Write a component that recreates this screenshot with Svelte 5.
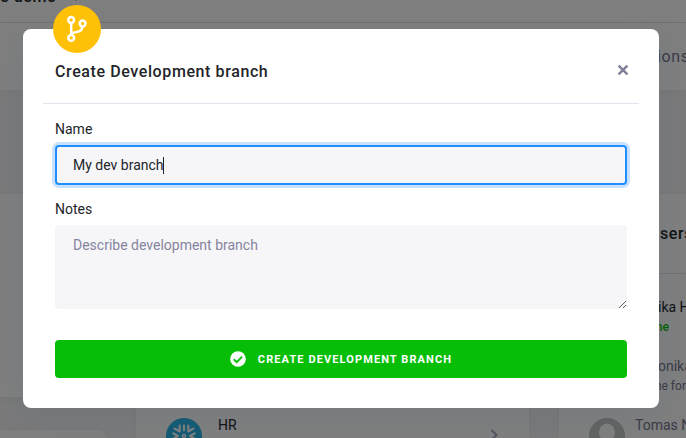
<script>
  let name = $state('My dev branch');
  let notes = $state('');
</script>

<div class="app">
  <div class="page" aria-hidden="true">
    <header><span>e demo</span><i class="caret"></i></header>
    <nav><span>ions</span></nav>
    <main>
      <div class="col left">
        <section class="card summary"></section>
        <section class="card next"></section>
      </div>
      <section class="card middle">
        <div class="bucket">
          <svg class="round" viewBox="0 0 36 36">
            <circle cx="18" cy="18" r="18" fill="#29b5e8" />
            <g fill="none" stroke="#fff" stroke-width="2.1" stroke-linecap="round" stroke-linejoin="round">
              <path d="M13.700 7.500v6L8.500 10.500M22.300 7.500v6l5.200-3M18 7.500v4.800" />
              <path d="M7.300 15.300l4.700 2.700-4.700 2.700M28.700 15.300L24 18l4.700 2.700" />
              <path d="M13.700 28.500v-6l-5.200 3M22.300 28.500v-6l5.200 3M18 28.500v-4.800" />
              <circle cx="18" cy="18" r="1.500" stroke-width="1.400" />
            </g>
          </svg>
          <span class="bucket-name">HR</span>
          <svg class="chevron" viewBox="0 0 8 12"><path d="M1.500 1l5 5-5 5" fill="none" stroke="#a9a8c4" stroke-width="2" /></svg>
        </div>
      </section>
      <section class="card users">
        <h3>sers</h3>
        <div class="user first"><b>ika H</b><small class="me">me</small></div>
        <div class="user second"><b>onika</b><small>me for</small></div>
        <div class="user third">
          <svg class="round" viewBox="0 0 36 36">
            <defs><clipPath id="avatar"><circle cx="18" cy="18" r="18" /></clipPath></defs>
            <g clip-path="url(#avatar)">
              <rect width="36" height="36" fill="#c5c6c6" />
              <ellipse cx="18" cy="14.500" rx="8" ry="9" fill="#fff" />
              <path d="M3 36c0-9 6-12 15-12s15 3 15 12z" fill="#fff" />
            </g>
          </svg>
          <b>Tomas N</b>
        </div>
      </section>
    </main>
  </div>

  <div class="backdrop">
    <div class="dialog" role="dialog" aria-labelledby="title">
      <div class="badge">
        <svg width="22" height="28" viewBox="0 0 22 28" fill="none" stroke="#fff" stroke-width="2.500">
          <circle cx="5.200" cy="5" r="2.900" />
          <circle cx="16.600" cy="8.500" r="2.900" />
          <circle cx="5.200" cy="22.900" r="2.900" />
          <path d="M5.200 8v11.800M5.200 18c5.400-.9 10.900-.8 11.200-6.500" />
        </svg>
      </div>
      <div class="head">
        <h2 id="title">Create Development branch</h2>
        <button class="close" aria-label="Close">
          <svg width="12" height="12" viewBox="0 0 12 12"><path d="M1.600 1.600l8.800 8.800M10.400 1.600l-8.800 8.800" stroke="#80809b" stroke-width="2.500" /></svg>
        </button>
      </div>
      <div class="body">
        <label for="name">Name</label>
        <div class="input" id="name" role="textbox" tabindex="0"><span>{name}</span><i class="cursor"></i></div>
        <label for="notes">Notes</label>
        <textarea id="notes" bind:value={notes} placeholder="Describe development branch"></textarea>
        <button class="submit">
          <svg width="16" height="16" viewBox="0 0 16 16"><circle cx="8" cy="8" r="7.800" fill="#fff" /><path d="M3.800 8.300l2.900 2.800 5.400-5.500" fill="none" stroke="#07be07" stroke-width="1.900" /></svg>
          <span>Create Development Branch</span>
        </button>
      </div>
    </div>
  </div>
</div>

<style>
  * { box-sizing: border-box; }
  .app {
    position: relative;
    width: 686px;
    height: 438px;
    overflow: hidden;
    font-family: Roboto, "Liberation Sans", sans-serif;
    font-size: 14px;
    color: #222529;
  }
  .page { height: 438px; overflow: hidden; background: #f5f5f6; }
  header {
    display: flex;
    align-items: flex-end;
    gap: 15px;
    height: 23px;
    padding-bottom: 15px;
    border-bottom: 1px solid #e4e4ef;
    background: #fff;
    font-size: 16px;
    font-weight: 500;
    line-height: 20px;
    letter-spacing: .6px;
  }
  .caret { width: 0; border: 4px solid transparent; border-top-color: #8d8ca7; border-bottom: 0; margin-bottom: 6px; }
  nav {
    display: flex;
    align-items: center;
    height: 67px;
    padding-left: 657px;
    background: #fff;
    box-shadow: 0 2px 12px rgba(0, 0, 0, .04);
    color: #77768f;
    font-size: 16px;
    letter-spacing: .6px;
  }
  main { display: flex; gap: 30px; padding-top: 104px; height: 348px; }
  .card { background: #fff; box-shadow: 0 2px 12px rgba(0, 0, 0, .05); }
  .left { display: flex; flex-direction: column; gap: 33px; width: 106px; flex: none; }
  .summary { height: 203px; flex: none; }
  .next { height: 40px; flex: none; border-radius: 0 8px 0 0; }
  .middle { width: 393px; flex: none; padding: 224px 31px 0 30px; }
  .bucket { display: flex; align-items: flex-start; }
  .round { width: 36px; height: 36px; flex: none; }
  .bucket-name { margin-left: 16px; line-height: 14px; }
  .chevron { width: 8px; height: 12px; margin: 11px 0 0 auto; }
  .users { width: 127px; flex: none; overflow: hidden; white-space: nowrap; }
  h3 {
    display: flex;
    align-items: center;
    height: 80px;
    margin: 0;
    padding-left: 101px;
    border-bottom: 1px solid #e4e4ef;
    font-size: 16px;
    font-weight: 500;
    letter-spacing: .6px;
  }
  .user { display: flex; flex-direction: column; padding-left: 99px; height: 59px; }
  .user b { font-weight: 400; line-height: 20px; }
  .user small { font-size: 12px; line-height: 20px; color: #77768f; }
  .first { padding-top: 23px; height: 83px; }
  .second { margin-top: -1px; height: 60px; }
  .second b, .third b { color: #77768f; }
  .second small { margin-left: -7px; }
  .user small.me { color: #07be07; margin-left: -6px; font-weight: 500; }
  .third { flex-direction: row; gap: 10px; padding-left: 30px; padding-top: 2px; }
  .third b { line-height: 14px; }

  .backdrop { position: absolute; inset: 0; padding: 29px 27px 30px 23px; background: rgba(0, 0, 0, .5); }
  .dialog {
    position: relative;
    height: 379px;
    padding: 0 20px;
    border-radius: 8px;
    background: #fff;
    box-shadow: 0 8px 32px rgba(65, 92, 112, .14);
  }
  .badge {
    position: absolute;
    top: -24px;
    left: 30px;
    display: flex;
    align-items: center;
    justify-content: center;
    width: 48px;
    height: 48px;
    border-radius: 50%;
    background: #ffc107;
  }
  .head {
    display: flex;
    justify-content: space-between;
    height: 75px;
    padding: 32px 10px 0 12px;
    border-bottom: 1px solid #e4e4ef;
  }
  h2 { margin: 0; font-size: 16px; line-height: 21px; font-weight: 500; letter-spacing: .6px; }
  button { border: 0; padding: 0; background: none; font-family: inherit; }
  .close { display: flex; height: 12px; margin-top: 3px; }
  .body { display: flex; flex-direction: column; padding: 15px 12px 0; }
  label { height: 20px; line-height: 20px; }
  .input {
    display: flex;
    align-items: center;
    height: 40px;
    margin: 6px 0 14px;
    padding: 0 16px;
    border: 2px solid #1f8fff;
    border-radius: 4px;
    background: #f6f6f9;
    box-shadow: 0 0 0 3px #c7e1ff;
  }
  .cursor { width: 1px; height: 17px; margin-left: -1px; background: #222529; }
  textarea {
    display: block;
    width: 100%;
    height: 84px;
    margin: 6px 0 31px;
    padding: 10px 18px;
    border: 0;
    border-radius: 4px;
    outline: 0;
    background: #f6f6f9;
    font: 14px/20px Roboto, "Liberation Sans", sans-serif;
    resize: vertical;
  }
  textarea::placeholder { color: #85849d; opacity: 1; }
  .submit {
    display: flex;
    align-items: center;
    justify-content: center;
    gap: 12px;
    height: 38px;
    border-radius: 4px;
    background: #07be07;
    color: #fff;
    font-size: 11px;
    font-weight: 700;
    letter-spacing: 1.100px;
    text-transform: uppercase;
  }
</style>
